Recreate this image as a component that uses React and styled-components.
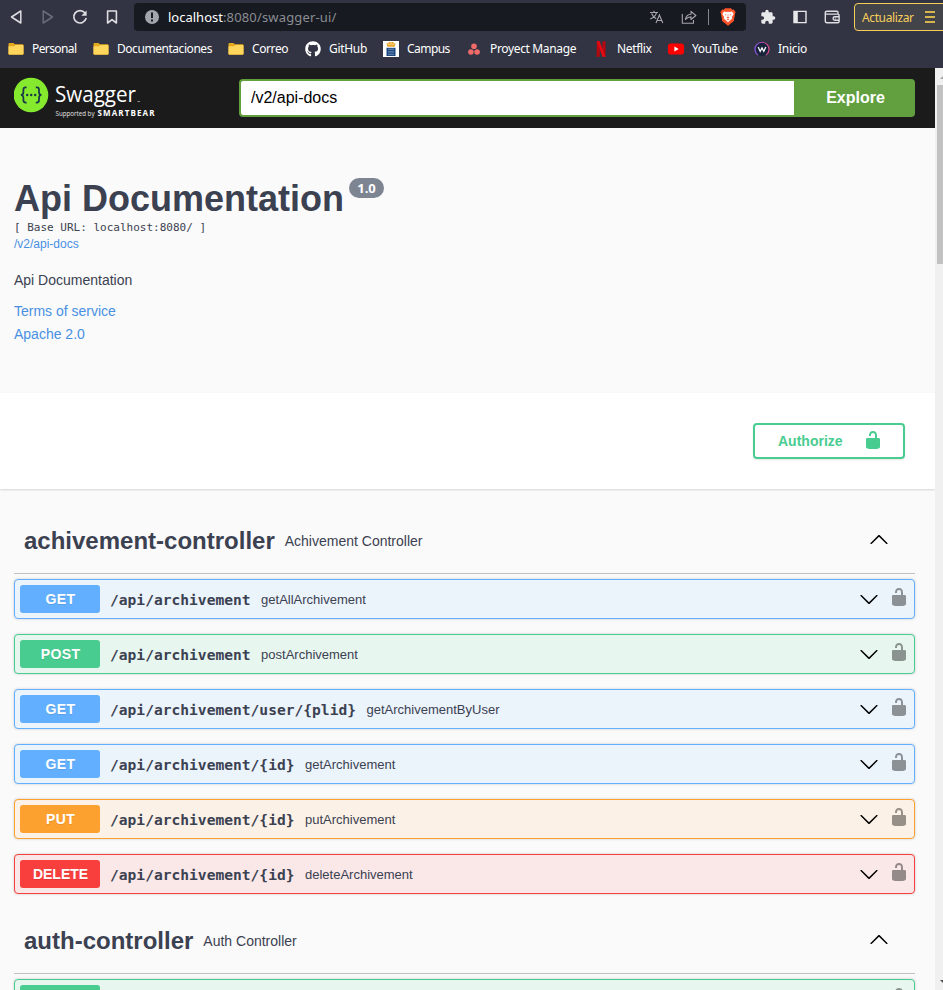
import React from "react";
import styled, { createGlobalStyle } from "styled-components";
import { FaGithub } from "react-icons/fa";

const GlobalStyle = createGlobalStyle`
  * { box-sizing: border-box; }
  html, body { margin: 0; padding: 0; overflow: hidden; }
  body { font-family: "Liberation Sans", Arial, sans-serif; color: #3b4151; background: #fafafa; }
  svg { display: block; flex: none; }
`;

const Window = styled.div`
  width: 943px;
  height: 990px;
  overflow: hidden;
  display: flex;
  flex-direction: column;
`;

/* ---------- browser chrome ---------- */
const Chrome = styled.header`
  flex: none;
  height: 68px;
  background: #323443;
  font-family: "Noto Sans", "Open Sans", sans-serif;
  color: #fff;
`;
const NavBar = styled.div`
  display: flex;
  align-items: center;
  height: 34px;
`;
const NavButtons = styled.div`
  display: flex;
  flex: none;
  gap: 16px;
  padding-left: 8px;
  width: 134px;
`;
const AddressBar = styled.div`
  display: flex;
  flex: none;
  align-items: center;
  width: 612px;
  height: 28px;
  padding: 0 10px;
  border-radius: 4px;
  background: #171a21;
`;
const Url = styled.div`
  flex: 1;
  margin-left: 8px;
  font-size: 13px;
  letter-spacing: 0.16px;
  white-space: nowrap;
  color: #8b8d93;
`;
const Host = styled.span`
  color: #fff;
  letter-spacing: 0;
`;
const AddressActions = styled.div`
  display: flex;
  align-items: center;
`;
const PageActions = styled.div`
  display: flex;
  gap: 16px;
`;
const Separator = styled.i`
  width: 1px;
  height: 16px;
  margin: 0 11px;
  background: #84868d;
`;
const Extensions = styled.div`
  display: flex;
  flex: none;
  gap: 16px;
  padding-left: 14px;
  width: 108px;
`;
const UpdateButton = styled.button`
  display: flex;
  flex: none;
  align-items: center;
  width: 94px;
  height: 28px;
  padding: 0 7px;
  gap: 11px;
  border: 1px solid #f6cf5b;
  border-radius: 4px;
  background: #43434a;
  color: #f6cf5b;
  font: 12px "Noto Sans", sans-serif;
  letter-spacing: -0.38px;
`;
const Bookmarks = styled.nav`
  display: flex;
  align-items: center;
  height: 30px;
  padding-left: 8px;
`;
const Bookmark = styled.a`
  display: flex;
  flex: none;
  align-items: center;
  gap: 8px;
  width: ${(p) => p.$width}px;
  font-size: 12px;
  line-height: 16px;
  letter-spacing: ${(p) => p.$spacing}px;
  white-space: nowrap;
`;

const stroke = { fill: "none", stroke: "#dddee2", strokeWidth: 1.5, strokeLinejoin: "round", strokeLinecap: "round" };

const BackIcon = () => <svg width="16" height="16"><path d="M12.8 2v12L3.5 8z" {...stroke} /></svg>;
const ForwardIcon = () => <svg width="16" height="16"><path d="M3.2 2v12L12.5 8z" {...stroke} stroke="#696b77" /></svg>;
const ReloadIcon = () => (
  <svg width="16" height="16">
    <path d="M12.8 3.8A6.2 6.2 0 1 0 14 9.5" {...stroke} strokeWidth="1.7" />
    <path d="M14.6 1.6v5.2H9.3z" fill="#dddee2" />
  </svg>
);
const BookmarkIcon = () => <svg width="16" height="16"><path d="M3.6 2h8.8v12L8 10.6 3.6 14z" {...stroke} strokeWidth="1.6" /></svg>;
const InfoIcon = () => (
  <svg width="16" height="16">
    <circle cx="8" cy="8" r="7" fill="#a3a5ad" />
    <path d="M7 3.5h2v5.6H7zM7 10.6h2v2H7z" fill="#171a21" />
  </svg>
);
const TranslateIcon = () => (
  <svg width="16" height="16" fill="none" stroke="#a5a7ac" strokeWidth="1.1">
    <path d="M1 3.5h8M5 1.8v1.7M7.5 3.6C6.8 6.5 4.5 8.7 1.2 10M2.6 4.5c.9 2.3 2.5 4 4.6 5.2M7 14l3.4-8 3.4 8M8.2 11.5h4.5" />
  </svg>
);
const ShareIcon = () => (
  <svg width="16" height="16" fill="none" stroke="#a5a7ac" strokeWidth="1.1" strokeLinejoin="round">
    <path d="M1.3 5v9.2h11.2V11M4.5 10.5C5 6.8 7 5.3 10 5.2V2.3L14.9 6.5 10 10.5V7.9C7.6 7.9 6 8.7 4.5 10.5z" />
  </svg>
);
const BraveIcon = () => (
  <svg width="16" height="18" viewBox="0 0 16 18">
    <path d="M3.8 1.8 5 .3h6l1.2 1.5 1.6-.2L15.6 4l-.6 2-1.2 7L8 17.8 2.2 13 1 6 .4 4l1.8-2.4z" fill="#fb542b" />
    <path d="m4 3.6 2.5.5L8 3.8l1.5.3 2.5-.5 1.7 2.3-1.9 3.1.4 1.6L8 14.2l-4.2-3.6.4-1.6-1.9-3.1z" fill="#fff" />
    <path d="m4.3 6.2 2.1.2-.4 1zM11.7 6.2l-2.1.2.4 1zM7.6 6.4h.8l-.2 2.4 1.2.9-1.4.8-1.4-.8 1.2-.9zM6.6 11.6l1.4-.5 1.4.5-1.4.9z" fill="#fb542b" />
  </svg>
);
const PuzzleIcon = () => (
  <svg width="16" height="16" viewBox="0 0 24 24">
    <path d="M20.5 11H19V7c0-1.1-.9-2-2-2h-4V3.5a2.5 2.5 0 0 0-5 0V5H4c-1.1 0-2 .9-2 2v3.8h1.5a2.7 2.7 0 0 1 0 5.4H2V20c0 1.1.9 2 2 2h3.8v-1.5a2.7 2.7 0 0 1 5.4 0V22H17c1.1 0 2-.9 2-2v-4h1.5a2.5 2.5 0 0 0 0-5z" fill="#e7e8ea" />
  </svg>
);
const SidebarIcon = () => (
  <svg width="16" height="16">
    <path d="M2 2.4h12v11.2H2z" fill="none" stroke="#e7e8ea" strokeWidth="1.4" />
    <path d="M2 2h3.8v12H2z" fill="#e7e8ea" />
  </svg>
);
const WalletIcon = () => (
  <svg width="17" height="16" fill="none" stroke="#dddee2" strokeWidth="1.4" strokeLinejoin="round">
    <path d="M14 5V3.4q0-1.2-1.2-1.2H3Q1.3 2.2 1.3 3.8v8Q1.3 13.8 3 13.8h10.8q1.3 0 1.3-1.3V6.4q0-1.3-1.3-1.3H2" />
    <path d="M15 7.8h-4.2a1.7 1.7 0 0 0 0 3.4H15M11.4 9.5h.6" />
  </svg>
);
const MenuIcon = () => <svg width="11" height="14"><path d="M0 2h10M0 7h10M0 12h10" stroke="#d6b54f" strokeWidth="1.8" /></svg>;

const FolderIcon = () => (
  <svg width="16" height="16">
    <path d="M.5 3q0-1 1-1h4l1.3 1.3h7.7q1 0 1 1V13q0 .8-1 .8h-13q-1 0-1-.8z" fill="#e5a91f" />
    <path d="M1 5.2h5l1.4-1.1h7.1q1 0 1 .8v7.8q0 .8-.9.8H1.4q-.9 0-.9-.8V5.7q0-.5.5-.5z" fill="#ffd65c" />
  </svg>
);
const CampusIcon = () => (
  <svg width="16" height="16">
    <path d="M0 0h16v16H0z" fill="#fff" />
    <path d="M3.5 2.2h2V1h5v1.2h2l-.8 3.6H4.3z" fill="#eaa72d" />
    <path d="M5.3 2.7h1.2v1.1H5.3zM9.5 2.7h1.2v1.1H9.5zM7.6 1.2h.8v2.6h-.8z" fill="#fff2c9" />
    <path d="M3.5 6.8h9V15h-9z" fill="#1b4680" />
    <path d="M6 7.6v6.6M8 7.6v6.6M10 7.6v6.6" stroke="#b2c6dc" strokeWidth=".8" strokeDasharray="1.5 1" />
  </svg>
);
const AsanaIcon = () => (
  <svg width="16" height="16" fill="#f06a6a">
    <circle cx="8" cy="5.2" r="2.8" /><circle cx="4.9" cy="11" r="2.8" /><circle cx="11.1" cy="11" r="2.8" />
  </svg>
);
const NetflixIcon = () => (
  <svg width="16" height="16">
    <path d="M3.7.3h3v15.4l-3 .3zM9.5.3h3V16l-3-.3z" fill="#b9070f" />
    <path d="M3.7.3h3L12.5 16l-3-.3z" fill="#e50914" />
  </svg>
);
const YouTubeIcon = () => (
  <svg width="16" height="16"><rect y="2.4" width="16" height="11.2" rx="2.8" fill="#f00" /><path d="M6.4 5.5v5L10.7 8z" fill="#fff" /></svg>
);
const InicioIcon = () => (
  <svg width="16" height="16">
    <defs><linearGradient id="ring" x2="1"><stop stopColor="#8855df" /><stop offset="1" stopColor="#df4b87" /></linearGradient></defs>
    <circle cx="8" cy="8" r="7.2" fill="#17233a" />
    <path d="M4 14A7 7 0 1 1 12 14" fill="none" stroke="url(#ring)" strokeWidth="1.2" />
    <path d="m4.2 6 2 4.4L8 7l1.8 3.4 2-4.4" fill="none" stroke="#fff" strokeWidth="1.3" />
  </svg>
);

const bookmarks = [
  { label: "Personal", width: 85, icon: <FolderIcon />, spacing: -0.6 },
  { label: "Documentaciones", width: 135, icon: <FolderIcon />, spacing: -0.45 },
  { label: "Correo", width: 77, icon: <FolderIcon />, spacing: -0.4 },
  { label: "GitHub", width: 78, icon: <FaGithub size={16} />, spacing: -0.3 },
  { label: "Campus", width: 83, icon: <CampusIcon />, spacing: -0.55 },
  { label: "Proyect Manage", width: 127, icon: <AsanaIcon />, spacing: -0.35 },
  { label: "Netflix", width: 75, icon: <NetflixIcon />, spacing: -0.35 },
  { label: "YouTube", width: 86, icon: <YouTubeIcon />, spacing: -0.4 },
  { label: "Inicio", width: 70, icon: <InicioIcon />, spacing: -0.3 },
];

/* ---------- page ---------- */
const Viewport = styled.div`
  flex: 1;
  min-height: 0;
  display: flex;
`;
const Page = styled.main`
  width: 935px;
  overflow: hidden;
  background: #fafafa;
`;
const Scrollbar = styled.aside`
  width: 8px;
  display: flex;
  flex-direction: column;
  align-items: flex-end;
  background: #f0f0f0;
`;
const Thumb = styled.div`
  width: 6px;
  height: 179px;
  margin-bottom: auto;
  background: #c1c1c1;
`;
const TopBar = styled.div`
  display: flex;
  align-items: center;
  height: 60px;
  padding: 0 20px 0 14px;
  background: #1b1b1b;
`;
const LogoSlot = styled.div`
  width: 225px;
`;
const UrlInput = styled.input`
  width: 555px;
  height: 38px;
  padding: 0 10px 1px;
  border: 2px solid #62a03f;
  border-right: 0;
  border-radius: 4px 0 0 4px;
  outline: 0;
  background: #fff;
  color: #000;
  font: 16px "Liberation Sans", Arial, sans-serif;
`;
const ExploreButton = styled.button`
  width: 121px;
  height: 38px;
  padding: 0 0 1px 2px;
  border: 0;
  border-radius: 0 4px 4px 0;
  background: #62a03f;
  color: #fff;
  font: bold 16px "Liberation Sans", Arial, sans-serif;
`;
const Info = styled.section`
  height: 265px;
  padding: 50px 14px 0;
`;
const TitleRow = styled.div`
  display: flex;
  align-items: flex-start;
  gap: 5px;
  height: 42px;
`;
const Title = styled.h1`
  margin: 0;
  font-size: 36px;
  line-height: 42px;
  white-space: nowrap;
`;
const Version = styled.span`
  width: 35px;
  height: 20px;
  border-radius: 20px;
  background: #7d8492;
  color: #fff;
  font: bold 13px/20px "Open Sans", sans-serif;
  text-align: center;
`;
const BaseUrl = styled.pre`
  margin: 0;
  font: 11px/16px "DejaVu Sans Mono", monospace;
`;
const Link = styled.a`
  display: block;
  color: #4990e2;
  font-size: ${(p) => (p.$small ? 12 : 14)}px;
  line-height: ${(p) => (p.$small ? 16 : 23)}px;
`;
const Description = styled.p`
  margin: 20px 0 12px;
  font-size: 14px;
  line-height: 16px;
`;
const AuthBar = styled.section`
  display: flex;
  justify-content: flex-end;
  align-items: center;
  height: 96px;
  padding-right: 30px;
  background: #fff;
  box-shadow: 0 1px 2px rgba(0, 0, 0, 0.15);
`;
const AuthorizeButton = styled.button`
  display: flex;
  align-items: center;
  gap: 20px;
  width: 152px;
  height: 36px;
  padding: 0 0 0 23px;
  border: 2px solid #49cc90;
  border-radius: 4px;
  background: transparent;
  box-shadow: 0 1px 2px rgba(0, 0, 0, 0.1);
  color: #49cc90;
  font: bold 14px "Liberation Sans", Arial, sans-serif;
  svg { fill: #49cc90; margin-top: -2px; }
`;
const Controllers = styled.div`
  padding: 20px 20px 0 14px;
`;
const TagHeader = styled.div`
  display: flex;
  align-items: center;
  height: 65px;
  margin-bottom: 5px;
  padding: 0 26px 1px 10px;
  border-bottom: 1px solid rgba(59, 65, 81, 0.3);
  svg { margin-top: -4px; }
`;
const TagName = styled.h3`
  margin: 0;
  font-size: 24px;
  line-height: 28px;
`;
const TagText = styled.small`
  flex: 1;
  margin-left: 10px;
  font-size: 14px;
`;

const colors = {
  GET: ["#61affe", "#ebf3fb"],
  POST: ["#49cc90", "#e8f6f0"],
  PUT: ["#fca130", "#fbf1e6"],
  DELETE: ["#f93e3e", "#fae7e7"],
};
const OperationRow = styled.div`
  display: flex;
  align-items: center;
  height: 40px;
  margin-bottom: 15px;
  padding: 0 5px;
  border: 1px solid ${(p) => colors[p.$method][0]};
  border-radius: 4px;
  background: ${(p) => colors[p.$method][1]};
  box-shadow: 0 0 3px rgba(0, 0, 0, 0.19);
`;
const Method = styled.span`
  width: 80px;
  height: 28px;
  padding-left: 1px;
  border-radius: 3px;
  background: ${(p) => colors[p.$method][0]};
  color: #fff;
  font-size: 14px;
  font-weight: bold;
  line-height: 28px;
  letter-spacing: ${(p) => (p.$method === "DELETE" ? 0 : 0.4)}px;
  text-align: center;
  text-shadow: 0 1px 0 rgba(0, 0, 0, 0.1);
`;
const Path = styled.span`
  padding: 2px 10px 0;
  font: bold 14.6px/18px "DejaVu Sans Mono", monospace;
`;
const Summary = styled.span`
  flex: 1;
  padding-left: 0.5px;
  font-size: 13px;
`;
const LockSlot = styled.span`
  margin: -4px 0 0 10px;
  opacity: 0.4;
`;

const LockIcon = () => (
  <svg width="20" height="20" viewBox="0 0 20 20">
    <path d="M15.8 8H14V5.6C14 2.703 12.665 1 10 1 7.334 1 6 2.703 6 5.6V6h2v-.801C8 3.754 8.797 3 10 3c1.203 0 2 .754 2 2.199V8H4c-.553 0-1 .646-1 1.199V17c0 .549.428 1.139.951 1.307l1.197.387C5.672 18.861 6.55 19 7.1 19h5.8c.549 0 1.428-.139 1.951-.307l1.196-.387c.524-.167.953-.757.953-1.306V9.199C17 8.646 16.352 8 15.8 8z" />
  </svg>
);
const ArrowDown = () => (
  <svg width="20" height="20"><path d="M17.418 6.109c.272-.268.709-.268.979 0s.271.701 0 .969l-7.908 7.83c-.27.268-.707.268-.979 0l-7.908-7.83c-.27-.268-.27-.701 0-.969.271-.268.709-.268.979 0L10 13.25z" /></svg>
);
const ArrowUp = () => (
  <svg width="20" height="20"><path d="M17.418 14.908c.272.268.709.268.979 0s.271-.701 0-.969l-7.908-7.83c-.27-.268-.707-.268-.979 0l-7.908 7.83c-.27.268-.27.701 0 .969.271.268.709.268.979 0L10 7.767z" /></svg>
);
const SwaggerLogo = () => (
  <svg width="150" height="44" viewBox="0 -1 150 44">
    <circle cx="17" cy="18" r="17.3" fill="#85ea2d" />
    <g fill="none" stroke="#173647" strokeWidth="1.7">
      <path d="M12.6 10.4h-1Q9.4 10.4 9.4 12.7v2.5Q9.4 17.7 7 18q2.4.3 2.4 2.8v2.5q0 2.3 2.2 2.3h1M21.8 10.4h1q2.2 0 2.2 2.3v2.5q0 2.5 2.4 2.8-2.4.3-2.4 2.8v2.5q0 2.3-2.2 2.3h-1" />
    </g>
    <g fill="#173647"><circle cx="13.2" cy="18" r="1.2" /><circle cx="17.2" cy="18" r="1.2" /><circle cx="21.2" cy="18" r="1.2" /></g>
    <text x="41" y="25" fill="#fff" fontFamily="Open Sans, Noto Sans, sans-serif" fontSize="21.5" fontWeight="400" textLength="81" lengthAdjust="spacingAndGlyphs">Swagger</text>
    <path d="M123.5 24.5h2.5" stroke="#aaa" strokeWidth=".8" />
    <text x="41.5" y="38.7" fill="#e6e6e6" fontFamily="Open Sans, sans-serif" fontSize="6.4" textLength="39" lengthAdjust="spacingAndGlyphs">Supported by</text>
    <text x="83.5" y="38.7" fill="#fff" fontFamily="Open Sans, sans-serif" fontSize="8" fontWeight="700" textLength="57">SMARTBEAR</text>
  </svg>
);

function Operation({ method, path, summary }) {
  return (
    <OperationRow $method={method}>
      <Method $method={method}>{method}</Method>
      <Path>{path}</Path>
      <Summary>{summary}</Summary>
      <ArrowDown />
      <LockSlot><LockIcon /></LockSlot>
    </OperationRow>
  );
}

const tags = [
  {
    name: "achivement-controller",
    text: "Achivement Controller",
    operations: [
      { method: "GET", path: "/api/archivement", summary: "getAllArchivement" },
      { method: "POST", path: "/api/archivement", summary: "postArchivement" },
      { method: "GET", path: "/api/archivement/user/{plid}", summary: "getArchivementByUser" },
      { method: "GET", path: "/api/archivement/{id}", summary: "getArchivement" },
      { method: "PUT", path: "/api/archivement/{id}", summary: "putArchivement" },
      { method: "DELETE", path: "/api/archivement/{id}", summary: "deleteArchivement" },
    ],
  },
  { name: "auth-controller", text: "Auth Controller", operations: [{ method: "POST", path: "", summary: "" }] },
];

export default function App() {
  return (
    <Window>
      <GlobalStyle />
      <Chrome>
        <NavBar>
          <NavButtons><BackIcon /><ForwardIcon /><ReloadIcon /><BookmarkIcon /></NavButtons>
          <AddressBar>
            <InfoIcon />
            <Url><Host>localhost</Host>:8080/swagger-ui/</Url>
            <AddressActions>
              <PageActions><TranslateIcon /><ShareIcon /></PageActions>
              <Separator />
              <BraveIcon />
            </AddressActions>
          </AddressBar>
          <Extensions><PuzzleIcon /><SidebarIcon /><WalletIcon /></Extensions>
          <UpdateButton>Actualizar<MenuIcon /></UpdateButton>
        </NavBar>
        <Bookmarks>
          {bookmarks.map((b) => (
            <Bookmark key={b.label} $width={b.width} $spacing={b.spacing}>{b.icon}{b.label}</Bookmark>
          ))}
        </Bookmarks>
      </Chrome>
      <Viewport>
        <Page>
          <TopBar>
            <LogoSlot><SwaggerLogo /></LogoSlot>
            <UrlInput defaultValue="/v2/api-docs" />
            <ExploreButton>Explore</ExploreButton>
          </TopBar>
          <Info>
            <TitleRow><Title>Api Documentation</Title><Version>1.0</Version></TitleRow>
            <BaseUrl>[ Base URL: localhost:8080/ ]</BaseUrl>
            <Link $small>/v2/api-docs</Link>
            <Description>Api Documentation</Description>
            <Link>Terms of service</Link>
            <Link>Apache 2.0</Link>
          </Info>
          <AuthBar><AuthorizeButton>Authorize<LockIcon /></AuthorizeButton></AuthBar>
          <Controllers>
            {tags.map((tag) => (
              <section key={tag.name}>
                <TagHeader><TagName>{tag.name}</TagName><TagText>{tag.text}</TagText><ArrowUp /></TagHeader>
                {tag.operations.map((op, i) => <Operation key={i} {...op} />)}
              </section>
            ))}
          </Controllers>
        </Page>
        <Scrollbar>
          <svg width="6" height="17"><path d="M3 11 8 6v5z" fill="#a3a3a3" /></svg>
          <Thumb />
          <svg width="6" height="12"><path d="M3 2h5v5z" fill="#505050" /></svg>
        </Scrollbar>
      </Viewport>
    </Window>
  );
}
